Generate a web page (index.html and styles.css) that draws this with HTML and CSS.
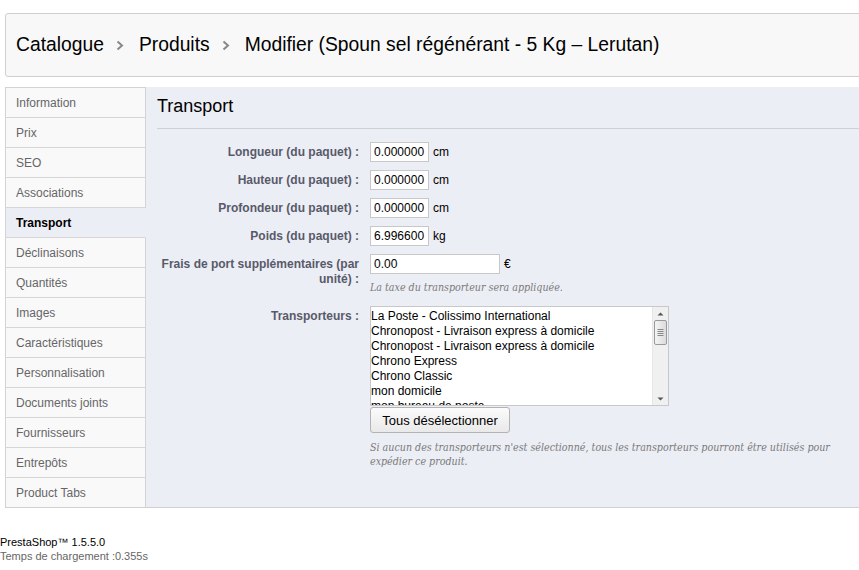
FILE: index.html
```html
<!DOCTYPE html>
<html lang="fr">
<head>
<meta charset="utf-8">
<title>Transport</title>
<link rel="stylesheet" href="styles.css">
</head>
<body>
<div class="page">
  <div class="toolbar">
    <h2 class="crumbs">
      <span>Catalogue</span>
      <svg class="chev" width="8" height="11" viewBox="0 0 8 11"><path d="M1.5 1.5 L6 5.5 L1.5 9.5" fill="none" stroke="#888" stroke-width="2"/></svg>
      <span>Produits</span>
      <svg class="chev" width="8" height="11" viewBox="0 0 8 11"><path d="M1.5 1.5 L6 5.5 L1.5 9.5" fill="none" stroke="#888" stroke-width="2"/></svg>
      <span>Modifier (Spoun sel régénérant - 5 Kg – Lerutan)</span>
    </h2>
  </div>
  <div class="main">
    <ul class="tabs">
      <li class="tab">Information</li>
      <li class="tab">Prix</li>
      <li class="tab">SEO</li>
      <li class="tab">Associations</li>
      <li class="tab active">Transport</li>
      <li class="tab">Déclinaisons</li>
      <li class="tab">Quantités</li>
      <li class="tab">Images</li>
      <li class="tab">Caractéristiques</li>
      <li class="tab">Personnalisation</li>
      <li class="tab">Documents joints</li>
      <li class="tab">Fournisseurs</li>
      <li class="tab">Entrepôts</li>
      <li class="tab">Product Tabs</li>
    </ul>
    <div class="panel">
      <h3 class="title">Transport</h3>
      <div class="form">
        <div class="row">
          <label class="lbl">Longueur (du paquet) :</label>
          <div class="field"><span class="input small">0.000000</span><span class="unit">cm</span></div>
        </div>
        <div class="row">
          <label class="lbl">Hauteur (du paquet) :</label>
          <div class="field"><span class="input small">0.000000</span><span class="unit">cm</span></div>
        </div>
        <div class="row">
          <label class="lbl">Profondeur (du paquet) :</label>
          <div class="field"><span class="input small">0.000000</span><span class="unit">cm</span></div>
        </div>
        <div class="row">
          <label class="lbl">Poids (du paquet) :</label>
          <div class="field"><span class="input small">6.996600</span><span class="unit">kg</span></div>
        </div>
        <div class="row">
          <label class="lbl">Frais de port supplémentaires (par unité) :</label>
          <div class="field col">
            <div class="line"><span class="input wide">0.00</span><span class="unit">€</span></div>
            <p class="hint">La taxe du transporteur sera appliquée.</p>
          </div>
        </div>
        <div class="row carriers">
          <label class="lbl">Transporteurs :</label>
          <div class="field col">
            <div class="select">
              <div class="options">
                <div class="opt">La Poste - Colissimo International</div>
                <div class="opt">Chronopost - Livraison express à domicile</div>
                <div class="opt">Chronopost - Livraison express à domicile</div>
                <div class="opt">Chrono Express</div>
                <div class="opt">Chrono Classic</div>
                <div class="opt">mon domicile</div>
                <div class="opt">mon bureau de poste</div>
              </div>
              <div class="scrollbar">
                <svg class="arrow" width="15" height="10" viewBox="0 0 15 10"><path d="M4.5 6.5 L7.5 3.5 L10.5 6.5 Z" fill="#555"/></svg>
                <div class="thumb">
                  <svg width="13" height="25" viewBox="0 0 13 25"><path d="M3.5 9.5 H9.5 M3.5 11.5 H9.5 M3.5 13.5 H9.5 M3.5 15.5 H9.5" stroke="#888" stroke-width="1"/></svg>
                </div>
                <div class="track"></div>
                <svg class="arrow" width="15" height="10" viewBox="0 0 15 10"><path d="M4.5 3.5 L7.5 6.5 L10.5 3.5 Z" fill="#555"/></svg>
              </div>
            </div>
            <div class="line"><button class="btn" type="button">Tous désélectionner</button></div>
            <p class="hint last">Si aucun des transporteurs n'est sélectionné, tous les transporteurs pourront être utilisés pour expédier ce produit.</p>
          </div>
        </div>
      </div>
    </div>
  </div>
</div>
<div class="footer">
  <div class="version">PrestaShop™ 1.5.5.0</div>
  <div class="time">Temps de chargement :0.355s</div>
</div>
</body>
</html>
```

FILE: styles.css
```css
html, body {
  margin: 0;
  padding: 0;
  overflow: hidden;
  background: #fff;
}
body {
  font-family: "Liberation Sans", Arial, sans-serif;
  font-size: 12px;
  color: #000;
  width: 859px;
  height: 570px;
}
.page {
  padding: 13px 0 0 5px;
  width: 870px;
}
.toolbar {
  background: #f8f8f8;
  border: 1px solid #cfcfcf;
  border-radius: 3px 0 0 3px;
  height: 62px;
  display: flex;
  align-items: center;
}
.crumbs {
  margin: 0 0 0 10px;
  font-size: 19.3px;
  font-weight: normal;
  display: flex;
  align-items: center;
  gap: 0;
  color: #000;
  white-space: nowrap;
}
.chev {
  margin: 1px 15px 0 12px;
}
.main {
  margin-top: 10px;
  display: flex;
  border-bottom: 1px solid #d0d0d0;
}
.tabs {
  list-style: none;
  margin: 0;
  padding: 0;
  width: 140px;
  flex: none;
  background: #f8f8f8;
  border-left: 1px solid #d3d3d3;
  border-top: 1px solid #d3d3d3;
}
.tab {
  height: 29px;
  border-bottom: 1px solid #d6d6d6;
  border-right: 1px solid #d3d3d3;
  padding-left: 10px;
  display: flex;
  align-items: center;
  color: #666;
  font-size: 12px;
  background: #f9f9fa;
}
.tab:last-child {
  border-bottom: none;
}
.tab.active {
  background: #eceef5;
  color: #000;
  font-weight: bold;
  border-right-color: #eceef5;
}
.panel {
  flex: 1;
  background: #eceef5;
  padding: 0 0 0 11px;
}
.title {
  margin: 0;
  font-size: 18px;
  font-weight: normal;
  color: #000;
  height: 41px;
  line-height: 38px;
  border-bottom: 1px solid #cdd0d9;
}
.form {
  padding-top: 13px;
}
.row {
  display: flex;
  align-items: flex-start;
  margin-bottom: 8px;
}
.lbl {
  width: 202px;
  flex: none;
  text-align: right;
  font-weight: bold;
  color: #585a69;
  font-size: 12px;
  line-height: 15px;
  padding-top: 3px;
  margin-right: 11px;
}
.field {
  display: flex;
  align-items: center;
}
.field.col {
  flex-direction: column;
  align-items: flex-start;
}
.line {
  display: flex;
  align-items: center;
}
.input {
  display: block;
  height: 18px;
  line-height: 18px;
  background: #fff;
  border: 1px solid #c8c8c8;
  padding: 0 0 0 3px;
  font-size: 12px;
  color: #000;
  overflow: hidden;
  white-space: nowrap;
  box-sizing: content-box;
}
.input.small {
  width: 54px;
}
.input.wide {
  width: 125px;
}
.unit {
  margin-left: 4px;
  font-size: 12px;
  color: #000;
}
.hint {
  margin: 6px 0 0 0;
  font-family: "DejaVu Serif", Georgia, serif;
  font-style: italic;
  font-stretch: condensed;
  font-size: 10.6px;
  line-height: 14px;
  color: #7a7a7a;
  width: 470px;
}
.hint.last {
  margin-top: 7px;
}
.carriers {
  margin-top: 12px;
}
.carriers .lbl {
  padding-top: 3px;
}
.select {
  width: 297px;
  height: 98px;
  border: 1px solid #c8c8c8;
  background: #fff;
  display: flex;
  overflow: hidden;
}
.options {
  flex: 1;
  padding: 2px 0 0 0;
  overflow: hidden;
}
.opt {
  font-size: 12px;
  line-height: 15px;
  padding-left: 0;
  white-space: nowrap;
  color: #000;
}
.scrollbar {
  width: 15px;
  flex: none;
  background: #f0f0f0;
  border-left: 1px solid #e6e6e6;
  display: flex;
  flex-direction: column;
  align-items: center;
  padding: 2px 0 1px;
}
.arrow {
  display: block;
  flex: none;
}
.thumb {
  width: 13px;
  height: 25px;
  border: 1px solid #9a9a9a;
  border-radius: 2px;
  box-sizing: border-box;
  background: linear-gradient(to right, #f4f4f4, #dcdcdc);
  margin-top: 1px;
}
.thumb svg {
  display: block;
  margin: -1px 0 0 -1px;
}
.track {
  flex: 1;
}
.btn {
  margin-top: 1px;
  height: 26px;
  width: 140px;
  padding: 0;
  font-family: "Liberation Sans", Arial, sans-serif;
  font-size: 13px;
  color: #000;
  background: linear-gradient(#fbfbfb, #e9e9e9);
  border: 1px solid #b3b3b3;
  border-radius: 3px;
}
.footer {
  margin-top: 27px;
  font-size: 11px;
  line-height: 14px;
}
.version {
  color: #000;
}
.time {
  color: #666;
}
```
